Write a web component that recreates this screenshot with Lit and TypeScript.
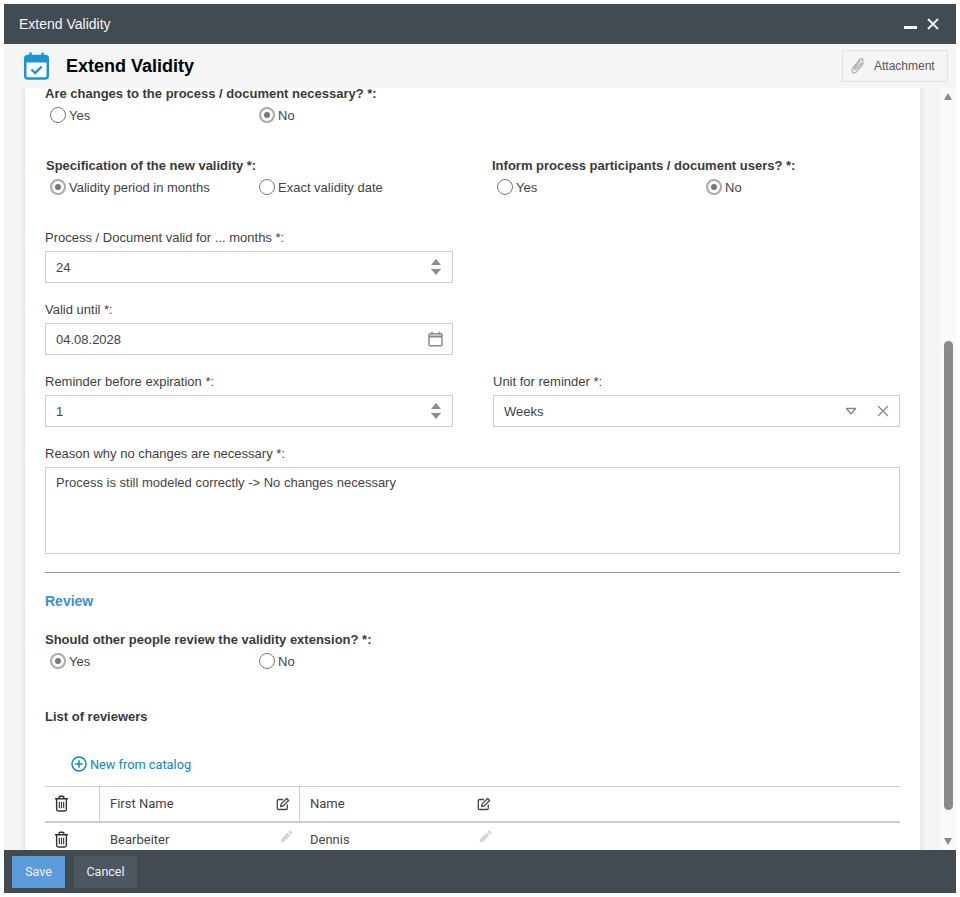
import { LitElement, html, css } from 'lit';
import { customElement } from 'lit/decorators.js';

const trash = html`<svg width="15" height="17" viewBox="0 0 16 18" fill="none" stroke="#333" stroke-width="1.5">
  <path d="M1 4h14M5.500 4V2.200c0-.6.4-1 1-1h3c.6 0 1 .4 1 1V4"/>
  <path d="M2.800 4v11.200c0 1 .7 1.800 1.700 1.800h7c1 0 1.700-.8 1.700-1.800V4"/>
  <path d="M5.700 7v7M8 7v7M10.300 7v7" stroke-width="1.200"/>
</svg>`;

const editHead = html`<svg width="14" height="14" viewBox="0 0 14 14" fill="none" stroke="#444" stroke-width="1.300">
  <path d="M7 2.500H2.600c-.8 0-1.300.5-1.300 1.300v7.400c0 .8.5 1.300 1.300 1.300H10c.8 0 1.300-.5 1.300-1.300V7.500"/>
  <path d="M5.200 6.900 10.600 1.500l2 2-5.400 5.400-2.500.5z"/>
</svg>`;

const pencil = html`<svg class="pencil" width="13" height="13" viewBox="0 0 14 14" fill="#d4d4d4">
  <path d="M10.200.9c.4-.4 1-.4 1.400 0l1.600 1.600c.4.4.4 1 0 1.400l-1.200 1.200-3-3zM8 3 11 6 4.400 12.600.6 13.500l.9-3.900z"/>
</svg>`;

@customElement('app-root')
export class AppRoot extends LitElement {
  static styles = css`
    :host {
      display: block;
      height: 897px;
      padding: 4px;
      box-sizing: border-box;
      background: #fff;
      font-family: 'Liberation Sans', Arial, sans-serif;
      font-size: 13px;
      color: #333;
    }

    .window {
      display: flex;
      flex-direction: column;
      height: 889px;
      overflow: hidden;
    }

    .titlebar {
      flex: none;
      display: flex;
      align-items: center;
      justify-content: space-between;
      height: 40px;
      padding: 0 16px 0 15px;
      background: #424a52;
      color: #f4f6f8;
      font-size: 14px;
    }

    .winbtns {
      display: flex;
      align-items: center;
      gap: 8px;
    }

    .subbar {
      flex: none;
      display: flex;
      align-items: center;
      height: 44px;
      padding: 0 8px 0 20px;
      background: #f5f5f5;
    }

    .subbar h1 {
      flex: 1;
      margin: 0 0 0 17px;
      font-size: 18px;
      font-weight: 700;
      color: #000;
    }

    .attach {
      display: flex;
      align-items: center;
      gap: 8px;
      box-sizing: border-box;
      height: 32px;
      width: 106px;
      padding-left: 7px;
      border: 1px solid #e3e3e3;
      font-size: 12px;
      color: #555;
    }

    .middle {
      flex: 1;
      display: flex;
      min-height: 0;
    }

    .gutter-l {
      flex: none;
      width: 21px;
      background: linear-gradient(to right, #f5f5f5 0, #f5f5f5 16px, #e6e6e6 21px);
    }

    .gutter-r {
      flex: none;
      width: 20px;
      background: linear-gradient(to right, #e8e8e8 0, #f5f5f5 6px);
    }

    .sheet {
      flex: 1;
      min-width: 0;
      overflow: hidden;
      background: #fff;
      padding: 1px 20px 0;
    }

    .scrollbar {
      flex: none;
      width: 16px;
      display: flex;
      flex-direction: column;
      align-items: center;
      background: #fafafa;
    }

    .scrollbar .track {
      flex: 1;
      width: 100%;
      display: flex;
      justify-content: center;
      padding-top: 241px;
      box-sizing: border-box;
    }

    .thumb {
      width: 9px;
      height: 469px;
      background: #8a8a8a;
      border-radius: 5px;
    }

    .arrow {
      flex: none;
      width: 0;
      height: 0;
      border-left: 4.500px solid transparent;
      border-right: 4.500px solid transparent;
    }

    .arrow.up {
      margin-top: 5px;
      border-bottom: 7px solid #8a8a8a;
    }

    .arrow.down {
      margin-bottom: 5px;
      border-top: 7px solid #8a8a8a;
    }

    .q {
      margin: 0;
      font-weight: 700;
      line-height: 14px;
      color: #3a3a3a;
    }

    .q.first {
      line-height: 10px;
      margin-bottom: 8px;
    }

    .q.right1 { margin-left: 1px; }
    .q.left1 { margin-left: -1px; }

    .radios {
      display: flex;
      height: 16px;
      margin: 6px 0 0 5px;
    }

    .radios.r4 { margin-left: 4px; }

    .radio {
      flex: none;
      display: flex;
      align-items: center;
      width: 209px;
      color: #444;
    }

    .radio i {
      flex: none;
      box-sizing: border-box;
      width: 16px;
      height: 16px;
      margin-right: 3px;
      border: 1px solid #777;
      border-radius: 50%;
      background: #fff;
      display: flex;
      align-items: center;
      justify-content: center;
    }

    .radio i.on {
      border: 2px solid #aaa;
    }

    .radio i.on::after {
      content: '';
      width: 6px;
      height: 6px;
      border-radius: 50%;
      background: #777;
    }

    .two {
      display: grid;
      grid-template-columns: 408px 407px;
      column-gap: 40px;
    }

    .label {
      display: block;
      line-height: 14px;
      margin-bottom: 6px;
      color: #3f3f3f;
    }

    .field {
      display: flex;
      align-items: center;
      box-sizing: border-box;
      height: 32px;
      padding: 0 11px 0 10px;
      border: 1px solid #ccc;
      color: #444;
    }

    .field span {
      flex: 1;
    }

    .field .cal {
      margin-right: -2px;
    }

    .field.select {
      padding-right: 10px;
    }

    .field .caret {
      margin-right: 20px;
    }

    .spin {
      display: flex;
      flex-direction: column;
      gap: 4px;
    }

    .spin b {
      display: block;
      width: 0;
      height: 0;
      border-left: 5px solid transparent;
      border-right: 5px solid transparent;
    }

    .spin b.u {
      border-bottom: 6px solid #8c8c8c;
    }

    .spin b.d {
      border-top: 6px solid #8c8c8c;
    }

    .area {
      box-sizing: border-box;
      height: 87px;
      padding: 8px 10px;
      border: 1px solid #ccc;
      color: #444;
      line-height: 14px;
    }

    hr {
      height: 1px;
      margin: 18px 0 0;
      border: 0;
      background: #999;
    }

    .section {
      margin: 20px 0 0;
      font-size: 14px;
      font-weight: 700;
      line-height: 16px;
      color: #3a8fd6;
    }

    .list-title {
      margin: 41px 0 0;
      font-weight: 700;
      line-height: 14px;
      color: #3a3a3a;
    }

    .add {
      display: flex;
      align-items: center;
      gap: 3px;
      height: 16px;
      margin: 32px 0 0 26px;
      font-family: Roboto, sans-serif;
      font-size: 12.750px;
      color: #0a8ac4;
    }

    .row {
      display: grid;
      grid-template-columns: 54px 200px 600px;
      width: 855px;
      font-family: Roboto, sans-serif;
      font-size: 13px;
      color: #444;
    }

    .row.head {
      height: 34px;
      margin-top: 14px;
      border-top: 1px solid #ccc;
      border-bottom: 2px solid #ccc;
    }

    .row.body {
      height: 32px;
    }

    .cell {
      display: flex;
      align-items: center;
      box-sizing: border-box;
      padding-left: 10px;
    }

    .head .cell {
      padding-bottom: 1px;
    }

    .head .cell + .cell {
      border-left: 1px solid #ccc;
    }

    .body .cell + .cell {
      padding-left: 11px;
    }

    .cell.del {
      padding-left: 9px;
    }

    .cell .txt {
      flex: 1;
    }

    .cell.first {
      padding-right: 9px;
    }

    .cell.last .txt {
      flex: none;
      width: 167px;
    }

    .pencil {
      margin: -6px -3px 0 0;
    }

    .cell.last .pencil {
      margin-left: 2px;
    }

    .footer {
      flex: none;
      display: flex;
      align-items: center;
      gap: 9px;
      height: 43px;
      padding: 0 8px;
      background: #424a52;
    }

    .btn {
      display: flex;
      align-items: center;
      justify-content: center;
      height: 32px;
      font-family: Roboto, sans-serif;
      font-size: 12.500px;
      color: #eef2f5;
    }

    .btn.save {
      width: 53px;
      background: #5b9bd9;
    }

    .btn.cancel {
      width: 63px;
      background: #4c575f;
    }

    .mt-36 { margin-top: 36px; }
    .mt-24 { margin-top: 24px; }
    .mt-20 { margin-top: 20px; }
  `;

  private radio(text: string, on = false) {
    return html`<label class="radio"><i class=${on ? 'on' : ''}></i>${text}</label>`;
  }

  private spinner() {
    return html`<div class="spin"><b class="u"></b><b class="d"></b></div>`;
  }

  render () {
    return html`
      <div class="window">
        <div class="titlebar">
          <span>Extend Validity</span>
          <div class="winbtns">
            <svg width="14" height="14" viewBox="0 0 14 14"><rect x="0" y="9" width="13" height="3" fill="#f4f6f8"/></svg>
            <svg width="14" height="14" viewBox="0 0 14 14" stroke="#f4f6f8" stroke-width="2"><path d="M2 2l10 10M12 2 2 12"/></svg>
          </div>
        </div>

        <div class="subbar">
          <svg width="25" height="28" viewBox="0 0 25 28" fill="none">
            <rect x="1.250" y="4" width="22.500" height="22.500" rx="2.500" stroke="#1c93d2" stroke-width="2.500" fill="#fff"/>
            <rect x="1.250" y="4" width="22.500" height="6.500" fill="#1c93d2"/>
            <path d="M6.500 1.500v5M18.500 1.500v5" stroke="#1c93d2" stroke-width="2.500" stroke-linecap="round"/>
            <path d="M7.500 17.500l3.600 3.500 6.600-6.500" stroke="#1c93d2" stroke-width="2.400"/>
          </svg>
          <h1>Extend Validity</h1>
          <div class="attach">
            <svg width="16" height="18" viewBox="0 0 16 18" fill="none" stroke="#aaa" stroke-width="1.200">
              <path d="M13.500 6 6.600 14.600c-1.100 1.400-2.800 1.600-3.900.7s-1.200-2.700-.1-4l7-8.800c.8-1 2-1.200 2.800-.5s.8 1.900 0 2.900L6 12c-.4.500-1 .6-1.400.3s-.4-.9 0-1.400L10.500 3.500"/>
            </svg>
            Attachment
          </div>
        </div>

        <div class="middle">
          <div class="gutter-l"></div>
          <div class="sheet">
            <p class="q first">Are changes to the process / document necessary? *:</p>
            <div class="radios">${this.radio('Yes')}${this.radio('No', true)}</div>

            <div class="two mt-36">
              <div>
                <p class="q right1">Specification of the new validity *:</p>
                <div class="radios">${this.radio('Validity period in months', true)}${this.radio('Exact validity date')}</div>
              </div>
              <div>
                <p class="q left1">Inform process participants / document users? *:</p>
                <div class="radios r4">${this.radio('Yes')}${this.radio('No', true)}</div>
              </div>
            </div>

            <div class="two mt-36">
              <div>
                <span class="label">Process / Document valid for ... months *:</span>
                <div class="field"><span>24</span>${this.spinner()}</div>
              </div>
            </div>

            <div class="two mt-20">
              <div>
                <span class="label">Valid until *:</span>
                <div class="field">
                  <span>04.08.2028</span>
                  <svg class="cal" width="15" height="16" viewBox="0 0 15 16" fill="none" stroke="#8a8a8a" stroke-width="1.500">
                    <rect x="1" y="2.800" width="13" height="12" rx="1"/>
                    <path d="M1 5.500h13" stroke-width="2"/>
                    <path d="M4 .8v3M11 .8v3"/>
                  </svg>
                </div>
              </div>
            </div>

            <div class="two mt-20">
              <div>
                <span class="label">Reminder before expiration *:</span>
                <div class="field"><span>1</span>${this.spinner()}</div>
              </div>
              <div>
                <span class="label">Unit for reminder *:</span>
                <div class="field select">
                  <span>Weeks</span>
                  <svg class="caret" width="12" height="8" viewBox="0 0 12 8" fill="none" stroke="#7c8a96" stroke-width="1.300" stroke-linejoin="round">
                    <path d="M1.500 1.500h9L6.500 6.500h-1z"/>
                  </svg>
                  <svg width="12" height="12" viewBox="0 0 12 12" fill="none" stroke="#7c8a96" stroke-width="1.300">
                    <path d="M1 1l10 10M11 1 1 11"/>
                  </svg>
                </div>
              </div>
            </div>

            <div class="mt-20">
              <span class="label">Reason why no changes are necessary *:</span>
              <div class="area">Process is still modeled correctly -&gt; No changes necessary</div>
            </div>

            <hr />
            <div class="section">Review</div>

            <p class="q mt-24">Should other people review the validity extension? *:</p>
            <div class="radios">${this.radio('Yes', true)}${this.radio('No')}</div>

            <p class="list-title">List of reviewers</p>

            <div class="add">
              <svg width="16" height="16" viewBox="0 0 16 16" fill="none" stroke="#0a8ac4" stroke-width="1.500">
                <circle cx="8" cy="8" r="7"/>
                <path d="M8 4.300v7.400M4.300 8h7.400"/>
              </svg>
              New from catalog
            </div>

            <div class="row head">
              <div class="cell del">${trash}</div>
              <div class="cell first"><span class="txt">First Name</span>${editHead}</div>
              <div class="cell last"><span class="txt">Name</span>${editHead}</div>
            </div>
            <div class="row body">
              <div class="cell del">${trash}</div>
              <div class="cell first"><span class="txt">Bearbeiter</span>${pencil}</div>
              <div class="cell last"><span class="txt">Dennis</span>${pencil}</div>
            </div>
          </div>
          <div class="gutter-r"></div>
          <div class="scrollbar">
            <div class="arrow up"></div>
            <div class="track"><div class="thumb"></div></div>
            <div class="arrow down"></div>
          </div>
        </div>

        <div class="footer">
          <div class="btn save">Save</div>
          <div class="btn cancel">Cancel</div>
        </div>
      </div>
    `;
  }
}
